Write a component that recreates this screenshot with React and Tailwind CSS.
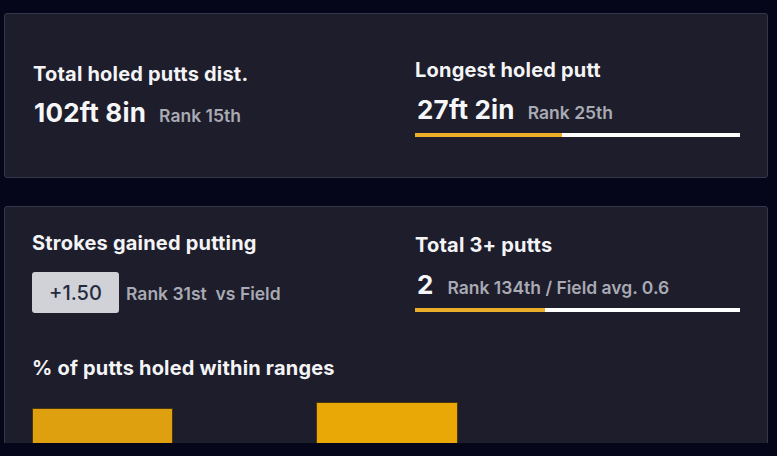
export default function App() {
  const font = { fontFamily: "Inter, 'Noto Sans', sans-serif" };

  return (
    <div className="h-[456px] w-full bg-[#05061a] overflow-hidden" style={font}>
      <div className="h-[443px] overflow-hidden pl-[4px] pr-[9px] pt-[13px]">
        {/* === Card: distance === */}
        <div className="h-[165px] rounded-[3px] border border-[#34364a] bg-[#1d1d2b] pl-[28px] pt-[44px] flex items-start">
          <div className="w-[382px] mt-[4px]">
            <div className="text-[20px] leading-[24px] font-bold tracking-[0.2px] text-[#f4f4f6]">
              Total holed putts dist.
            </div>
            <div className="mt-[10px] flex items-baseline leading-[34px] pl-[1px]">
              <span className="text-[26px] font-bold tracking-[0.2px] text-[#f6f6f8]">
                102ft 8in
              </span>
              <span className="ml-[13px] text-[17.5px] font-semibold tracking-[0px] text-[#a9aab3]">
                Rank 15th
              </span>
            </div>
          </div>
          <div className="w-[325px]">
            <div className="text-[20px] leading-[24px] font-bold tracking-[0.2px] text-[#f4f4f6]">
              Longest holed putt
            </div>
            <div className="mt-[11px] flex items-baseline leading-[34px] pl-[2px]">
              <span className="text-[26px] font-bold tracking-[0.2px] text-[#f6f6f8]">
                27ft 2in
              </span>
              <span className="ml-[13px] text-[17.5px] font-semibold tracking-[0px] text-[#a9aab3]">
                Rank 25th
              </span>
            </div>
            <div className="mt-[3px] flex h-[4px] w-full">
              <div className="h-full w-[147px] bg-[#eaae28]" />
              <div className="h-full flex-1 bg-white" />
            </div>
          </div>
        </div>

        {/* === Card: strokes gained === */}
        <div className="mt-[28px] h-[300px] rounded-[3px] border border-[#34364a] bg-[#1d1d2b] pl-[27px] pt-[24px]">
          <div className="flex items-start">
            <div className="w-[383px]">
              <div className="text-[20px] leading-[24px] font-bold tracking-[0.2px] text-[#f4f4f6]">
                Strokes gained putting
              </div>
              <div className="mt-[17px] flex items-center">
                <div className="flex h-[41px] w-[87px] items-center justify-center rounded-[3px] bg-[#d0d2d8] text-[20px] font-medium tracking-[0px] text-[#262a3e]">
                  +1.50
                </div>
                <span className="ml-[7px] mt-[3px] text-[17.5px] font-semibold tracking-[0px] text-[#a9aab3]">
                  Rank 31st&nbsp; vs Field
                </span>
              </div>
            </div>
            <div className="w-[325px] mt-[2px]">
              <div className="text-[20px] leading-[24px] font-bold tracking-[0.2px] text-[#f4f4f6]">
                Total 3+ putts
              </div>
              <div className="mt-[11px] flex items-baseline leading-[34px] pl-[2px]">
                <span className="text-[26px] font-bold text-[#f6f6f8]">2</span>
                <span className="ml-[14px] text-[17.5px] font-semibold tracking-[0px] text-[#a9aab3]">
                  Rank 134th / Field avg. 0.6
                </span>
              </div>
              <div className="mt-[3px] flex h-[4px] w-full">
                <div className="h-full w-[130px] bg-[#eaae28]" />
                <div className="h-full flex-1 bg-white" />
              </div>
            </div>
          </div>

          <div className="mt-[43px] text-[20px] leading-[24px] font-bold tracking-[0.2px] text-[#f4f4f6]">
            % of putts holed within ranges
          </div>

          <div className="mt-[22px] flex items-start gap-[143px]">
            <div className="mt-[6px] h-[120px] w-[141px] border border-[#4a360c] bg-[#dfa00f]" />
            <div className="h-[120px] w-[142px] border border-[#4a360c] bg-[#eaa807]" />
          </div>
        </div>
      </div>
    </div>
  );
}
